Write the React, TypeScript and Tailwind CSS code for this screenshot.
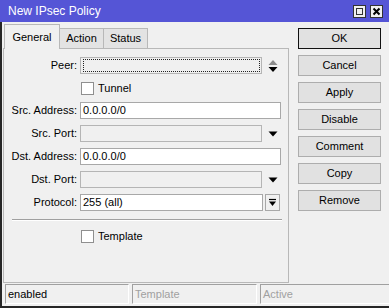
import React from "react";

function Triangle({ color = "#000" }: { color?: string }) {
  return (
    <svg width="10" height="6" viewBox="0 0 10 6">
      <path d="M0.5 0.5 L9.5 0.5 L5 5.5 Z" fill={color} />
    </svg>
  );
}

function Spinner() {
  return (
    <svg width="10" height="14" viewBox="0 0 10 14">
      <path d="M0.5 6 L9.5 6 L5 1 Z" fill="#8c8c8c" />
      <path d="M0.5 8 L9.5 8 L5 13 Z" fill="#000" />
    </svg>
  );
}

function Field({
  label,
  value,
  width,
  disabled,
  focus,
  after,
}: {
  label: string;
  value?: string;
  width: string;
  disabled?: boolean;
  focus?: boolean;
  after?: React.ReactNode;
}) {
  return (
    <div className="flex h-[17px] items-center">
      <div className="w-[74px] text-right pr-[1px] leading-none">{label}</div>
      <div
        className={
          "ml-[2px] h-[17px] border flex items-center pl-[2px] leading-none " +
          width +
          " " +
          (disabled ? "bg-[#f0f0f0] border-[#b5b5b5]" : "bg-white border-[#a8a8a8]")
        }
      >
        {focus ? (
          <div className="w-full h-[13px] mr-[1px] border border-dotted border-[#222]" />
        ) : (
          value
        )}
      </div>
      {after}
    </div>
  );
}

function Check({ label }: { label: string }) {
  return (
    <div className="flex h-[17px] items-center">
      <div className="ml-[77px] w-[13px] h-[13px] border border-[#8f8f8f] bg-white" />
      <div className="ml-[4px] leading-none">{label}</div>
    </div>
  );
}

function Btn({ label, def }: { label: string; def?: boolean }) {
  return (
    <div
      className={
        "w-[83px] h-[21px] flex items-center justify-center bg-[#e1e1e1] border leading-none " +
        (def ? "border-[#111]" : "border-[#adadad]")
      }
    >
      {label}
    </div>
  );
}

export default function App() {
  return (
    <div className="w-[389px] h-[308px] bg-[#f0f0f0] flex flex-col overflow-hidden text-[11px] text-black font-['Liberation_Sans',Arial,sans-serif]">
      {/* Title bar */}
      <div className="h-[22px] bg-[#5555d6] flex items-center justify-between pl-[8px] pr-[6px] shrink-0">
        <div className="text-white text-[12px] leading-none">New IPsec Policy</div>
        <div className="flex gap-[4px]">
          <div className="w-[13px] h-[13px] bg-[#f0f0f0] border border-[#333] flex items-center justify-center">
            <div className="w-[7px] h-[7px] border border-[#333]" />
          </div>
          <div className="w-[13px] h-[13px] bg-[#f0f0f0] border border-[#333] flex items-center justify-center">
            <svg width="9" height="9" viewBox="0 0 9 9">
              <path d="M1.5 1.5 L7.5 7.5 M7.5 1.5 L1.5 7.5" stroke="#000" strokeWidth="2" />
            </svg>
          </div>
        </div>
      </div>

      {/* Body */}
      <div className="flex-1 flex flex-col border-l-2 border-b-2 border-[#262626]">
        <div className="flex flex-1">
          {/* Left: tabs + panel */}
          <div className="ml-[1px] w-[286px] flex flex-col">
            <div className="h-[26px] flex items-end pt-[2px]">
              <div className="ml-[1px] w-[56px] h-[25px] bg-[#f0f0f0] border-t border-l border-r border-[#b8b8b8] flex items-center justify-center leading-none relative top-[1px]">
                General
              </div>
              <div className="w-[44px] h-[20px] bg-[#e3e3e3] border-t border-r border-[#b8b8b8] flex items-center justify-center leading-none">
                Action
              </div>
              <div className="w-[44px] h-[20px] bg-[#e3e3e3] border-t border-r border-[#b8b8b8] flex items-center justify-center leading-none">
                Status
              </div>
            </div>
            <div className="h-[235px] border border-[#b8b8b8] bg-[#f0f0f0] flex flex-col pt-[8px]">
              <Field
                label="Peer:"
                width="w-[182px]"
                disabled
                focus
                after={
                  <div className="ml-[6px] w-[10px] flex items-center">
                    <Spinner />
                  </div>
                }
              />
              <div className="mt-[6px]">
                <Check label="Tunnel" />
              </div>
              <div className="mt-[5px] flex flex-col gap-[6px]">
                <Field label="Src. Address:" value="0.0.0.0/0" width="w-[201px]" />
                <Field
                  label="Src. Port:"
                  width="w-[182px]"
                  disabled
                  after={
                    <div className="ml-[6px] w-[10px] flex items-center">
                      <Triangle />
                    </div>
                  }
                />
                <Field label="Dst. Address:" value="0.0.0.0/0" width="w-[201px]" />
                <Field
                  label="Dst. Port:"
                  width="w-[182px]"
                  disabled
                  after={
                    <div className="ml-[6px] w-[10px] flex items-center">
                      <Triangle />
                    </div>
                  }
                />
                <Field
                  label="Protocol:"
                  value="255 (all)"
                  width="w-[183px]"
                  after={
                    <div className="ml-[2px] w-[15px] h-[17px] border border-[#a8a8a8] bg-[#f0f0f0] flex items-center justify-center">
                      <svg width="9" height="9" viewBox="0 0 9 9">
                        <path d="M1 1.5 L8 1.5" stroke="#000" strokeWidth="1.2" />
                        <path d="M1 3.5 L8 3.5 L4.5 8 Z" fill="#000" />
                      </svg>
                    </div>
                  }
                />
              </div>
              <div className="mt-[8px] ml-[8px] mr-[6px] border-t border-[#a0a0a0] border-b border-b-white" />
              <div className="mt-[7px]">
                <Check label="Template" />
              </div>
            </div>
          </div>

          {/* Right: buttons */}
          <div className="ml-[9px] pt-[6px] flex flex-col gap-[6px]">
            <Btn label="OK" def />
            <Btn label="Cancel" />
            <Btn label="Apply" />
            <Btn label="Disable" />
            <Btn label="Comment" />
            <Btn label="Copy" />
            <Btn label="Remove" />
          </div>
        </div>

        {/* Status bar */}
        <div className="h-[23px] flex gap-[3px] pl-[3px] pt-[1px] shrink-0">
          <div className="w-[124px] h-[20px] border-t border-l border-[#a0a0a0] border-r border-r-white border-b border-b-white flex items-center pl-[2px] leading-none">
            enabled
          </div>
          <div className="w-[125px] h-[20px] border-t border-l border-[#a0a0a0] border-r border-r-white border-b border-b-white flex items-center pl-[2px] leading-none text-[#a0a0a0]">
            Template
          </div>
          <div className="flex-1 h-[20px] border-t border-l border-[#a0a0a0] border-b border-b-white flex items-center pl-[2px] leading-none text-[#a0a0a0]">
            Active
          </div>
        </div>
      </div>
    </div>
  );
}
